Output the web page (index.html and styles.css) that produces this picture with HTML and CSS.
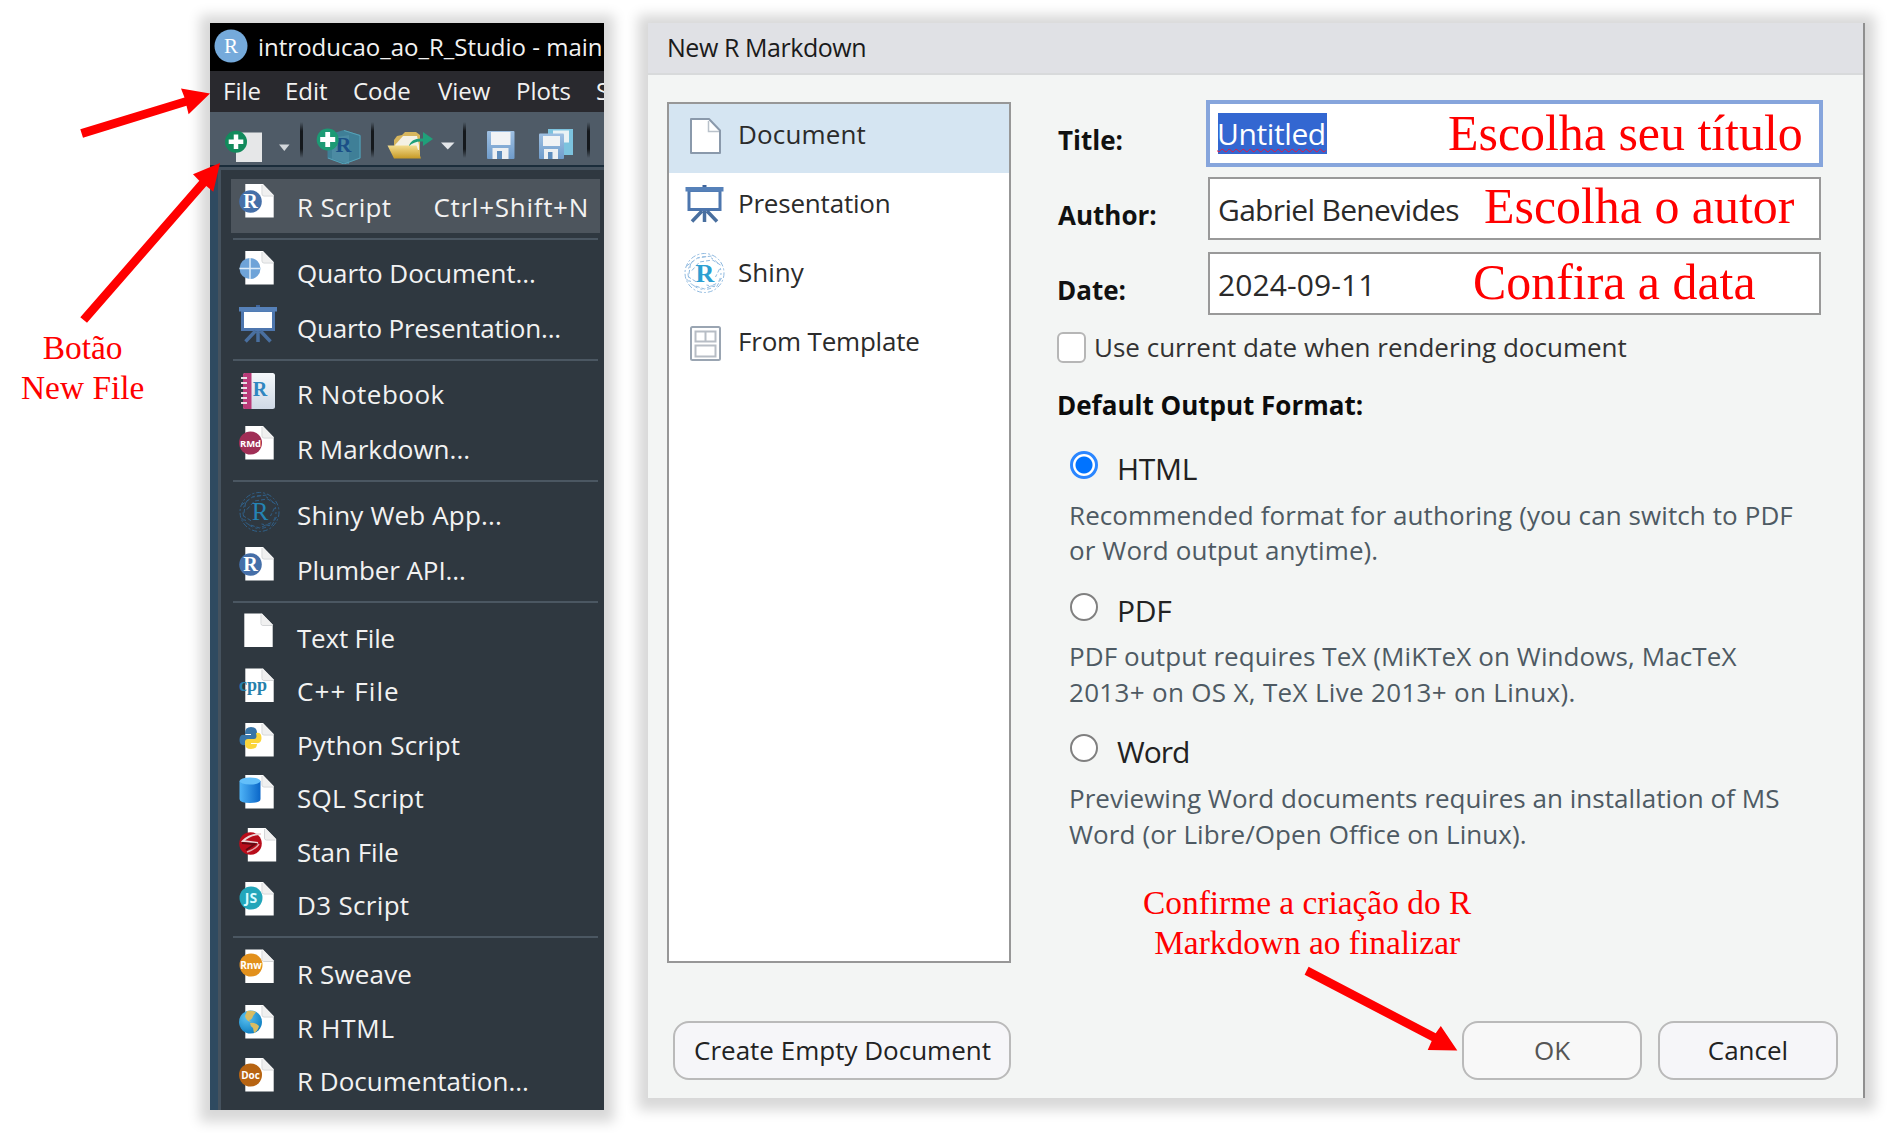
FILE: index.html
```html
<!DOCTYPE html>
<html lang="pt-BR">
<head>
<meta charset="utf-8">
<title>New R Markdown</title>
<link rel="stylesheet" href="styles.css">
</head>
<body>
<svg class="defs" width="0" height="0" aria-hidden="true">
  <defs>
    <linearGradient id="g-folder" x1="0" y1="0" x2="0" y2="1"><stop offset="0" stop-color="#f3dd8f"/><stop offset="1" stop-color="#c79a26"/></linearGradient>
    <linearGradient id="g-db" x1="0" y1="0" x2="1" y2="0"><stop offset="0" stop-color="#4fb4f7"/><stop offset="1" stop-color="#0a66c8"/></linearGradient>
    <linearGradient id="g-book" x1="0" y1="0" x2="0" y2="1"><stop offset="0" stop-color="#f5f8fb"/><stop offset="1" stop-color="#cfd9e6"/></linearGradient>
    <linearGradient id="g-disk" x1="0" y1="0" x2="0" y2="1"><stop offset="0" stop-color="#9fc0e2"/><stop offset="1" stop-color="#6f9ccb"/></linearGradient>
    <radialGradient id="g-globe" cx=".35" cy=".3" r=".8"><stop offset="0" stop-color="#5cc3f2"/><stop offset="1" stop-color="#0879bd"/></radialGradient>
    <symbol id="page" viewBox="0 0 44 54"><path d="M9.300 5H27l10.700 11v22.500H9.300z" fill="#fff"/><path d="M26.500 5v9.500q0 2 2 2h9.200z" fill="#f0f0f0"/><path d="M26 6v9q0 2 2 2h9" fill="none" stroke="#d3d5d7" stroke-width="1"/></symbol>
    <symbol id="easel" viewBox="0 0 40 40">
      <path d="M18.500 0h4v4h-4z" fill="#3f659c"/><rect x="3.500" y="4" width="34" height="22" fill="#4d76ae"/><rect x="6.500" y="7" width="28" height="16" fill="#fff"/><rect x="1.500" y="2" width="38" height="4.500" fill="#5681b9"/>
      <path d="M20.500 26v11M18 26L8 36.500M23 26l10 10.500" stroke="#496f9f" stroke-width="3.500" fill="none"/>
    </symbol>
    <symbol id="atom" viewBox="0 0 44 44">
      <g fill="none" stroke-width="1"><circle cx="22" cy="22" r="19.500" stroke-dasharray="5 2 2 2"/><circle cx="22" cy="22" r="16.500" stroke-dasharray="2 3 4 5"/>
      <path stroke-dasharray="4 2" d="M4 15L15 7 29 5M38 14L30 9 17 11 9 20M4 28L10 34 22 38 35 32M39 27L34 36 24 34M8 13L6 26 14 31M37 18L33 26"/></g>
    </symbol>
  </defs>
</svg>

<main class="stage">
  <section class="ide">
    <header class="ide-title">
      <svg width="34" height="34" viewBox="0 0 34 34"><circle cx="17" cy="17" r="16.500" fill="#75aadb"/><text x="17" y="23.500" class="serif" font-size="21" fill="#fff" text-anchor="middle">R</text></svg>
      <span>introducao_ao_R_Studio - main</span>
    </header>
    <nav class="menubar"><span>File</span><span>Edit</span><span>Code</span><span>View</span><span>Plots</span><span>Session</span></nav>
    <div class="toolbar">
      <svg width="65" height="52" viewBox="210 112 65 52"><rect x="236" y="132.500" width="26" height="29.500" fill="#e6e7e8"/><circle cx="236" cy="141.700" r="11" fill="#128a5c"/><path d="M236 134.500v14.500M228.700 141.700h14.600" stroke="#fff" stroke-width="4.500"/></svg>
      <svg width="20" height="52" viewBox="275 112 20 52"><path d="M279 144.500h10.500l-5.200 6.500z" fill="#d2d6da"/></svg>
      <i class="tsep"></i>
      <svg width="61" height="52" viewBox="305 112 61 52"><path d="M344 130l16.500 5v23.500L344 164l-16.500-5.500V135z" fill="#3f7f97"/><path d="M332 138l17-3v29l-17-5z" fill="#4c8ba3"/><text x="343.500" y="152" class="serif" font-size="22" font-weight="bold" fill="#1b5087" text-anchor="middle">R</text><path d="M344 130.500l16 5v22.500l-16 6-16-6" fill="none" stroke="#57a3b8" stroke-width="1"/><circle cx="327.700" cy="139.500" r="11" fill="#1c9a74"/><path d="M327.700 132v15M320.200 139.500h15" stroke="#fff" stroke-width="4.800"/></svg>
      <i class="tsep"></i>
      <svg width="82" height="52" viewBox="376 112 82 52"><path d="M394 158V140l3-4 5-1 3-3h11l4 3v23z" fill="#d7b65d"/><path d="M395 145l8-9h14l2 9v5h-22z" fill="#f4f1e4"/><path d="M387.500 145.500h29l4.500 13h-27z" fill="url(#g-folder)"/><path d="M409 146c1-5 6-8 14-7.500V132l10 7-10 7v-4.500c-6-.500-10 1-14 4.500z" fill="#20a07a"/><path d="M441 142.500h13.500l-6.700 7z" fill="#e3e6e9"/></svg>
      <i class="tsep"></i>
      <svg width="114" height="52" viewBox="468 112 114 52"><rect x="487" y="131" width="27.500" height="28" rx="1" fill="url(#g-disk)"/><rect x="491" y="132" width="19.500" height="13" fill="#f1f3f5"/><rect x="492.500" y="148" width="16" height="11" fill="#edf0f2"/><rect x="497" y="151" width="5" height="8" fill="#5e8dbd"/><rect x="548" y="129" width="25" height="26" fill="#7cc3de"/><rect x="553" y="130.500" width="16" height="12" fill="#e9f2f5"/><rect x="539" y="133.500" width="25" height="25.500" rx="1" fill="url(#g-disk)"/><rect x="543" y="136" width="17" height="10" fill="#f1f3f5"/><rect x="544" y="149" width="14" height="10" fill="#edf0f2"/><rect x="548" y="152" width="4.500" height="7" fill="#5e8dbd"/></svg>
      <i class="tsep"></i>
    </div>
    <div class="menu">
      <div class="row hot"><svg viewBox="0 0 44 54"><use href="#page"/><circle cx="14.500" cy="22.500" r="11.300" fill="#456fa8"/><text x="14.500" y="29" class="serif" font-size="20" font-weight="bold" fill="#fff" text-anchor="middle">R</text></svg><span class="ls3">R Script</span><kbd>Ctrl+Shift+N</kbd></div>
      <hr>
      <div class="row"><svg viewBox="0 0 44 54"><use href="#page" y="1"/><circle cx="14" cy="23.500" r="10.500" fill="#6ea3d8"/><path d="M14 13v21M3.500 23.500h21" stroke="#dcebf8" stroke-width="1.500"/></svg><span class="lsd">Quarto Document...</span></div>
      <div class="row"><svg viewBox="0 0 44 54"><use href="#easel" x="1.500" y="5" width="40" height="40"/></svg><span class="lsn">Quarto Presentation...</span></div>
      <hr>
      <div class="row"><svg viewBox="0 0 44 54"><rect x="7" y="7" width="32" height="36" rx="2.500" fill="url(#g-book)"/><path d="M9 7h6.500v36H9q-2 0-2-2V9q0-2 2-2z" fill="#b93a78"/><path d="M5 12h6M5 17h6M5 22h6M5 27h6M5 32h6M5 37h6" stroke="#e8dfe6" stroke-width="2"/><text x="24" y="30" class="serif" font-size="20" font-weight="bold" fill="#2f86c0" text-anchor="middle">R</text></svg><span class="ls5">R Notebook</span></div>
      <div class="row"><svg viewBox="0 0 44 54"><use href="#page"/><circle cx="14.500" cy="22" r="11.500" fill="#a02e56"/><text x="14.500" y="25.500" class="sans" font-size="9.500" font-weight="bold" fill="#fff" text-anchor="middle">RMd</text></svg><span>R Markdown...</span></div>
      <hr>
      <div class="row"><svg viewBox="0 0 44 54"><use href="#atom" x="1.500" y="3" width="44" height="44" stroke="#31618a"/><text x="24" y="33" class="serif" font-size="25" fill="#2584b4" text-anchor="middle">R</text></svg><span class="ls1">Shiny Web App...</span></div>
      <div class="row"><svg viewBox="0 0 44 54"><use href="#page"/><circle cx="14.500" cy="22.500" r="11.300" fill="#456fa8"/><text x="14.500" y="29" class="serif" font-size="20" font-weight="bold" fill="#fff" text-anchor="middle">R</text></svg><span class="lsd">Plumber API...</span></div>
      <hr>
      <div class="group files">
      <div class="row"><svg viewBox="0 0 44 54"><use href="#page" x="-1" y="-1.500"/></svg><span class="lsn">Text File</span></div>
      <div class="row"><svg viewBox="0 0 44 54"><use href="#page" y="0.500"/><text x="17" y="27.500" class="serif" font-size="18" font-weight="bold" fill="#2680ab" text-anchor="middle">cpp</text></svg><span class="ls10">C++ File</span></div>
      <div class="row"><svg viewBox="0 0 44 54"><use href="#page" y="1"/><path d="M9 16q0-6 6-6t6 6v4q0 3-3 3h-6q-3 0-3 3v2q-5.500 1-5.500-5t5.500-5h6v-1H9z" fill="#3875a8"/><path d="M20 16q5.500-1 5.500 5t-5.500 5h-5v1h6q0 5-6 5t-6-5v-2q0-3 3-3h6q2.500 0 2.500-3z" fill="#fbd63c"/></svg><span class="ls1">Python Script</span></div>
      <div class="row"><svg viewBox="0 0 44 54"><use href="#page"/><path d="M3.500 11v18q0 4 10.500 4t10.500-4V11z" fill="url(#g-db)"/><ellipse cx="14" cy="11" rx="10.500" ry="3.500" fill="#63bffa"/></svg><span class="ls3">SQL Script</span></div>
      <div class="row"><svg viewBox="0 0 44 54"><use href="#page" x="2.500" y="-1"/><circle cx="14.500" cy="19.500" r="11.300" fill="#b80d1b"/><path d="M25 10c-8 0-14 3-18 7l15 2" fill="none" stroke="#ecd5d7" stroke-width="2"/><path d="M6 19l13 1-9 6" fill="none" stroke="#650711" stroke-width="2"/><path d="M23 20q-3 5-12 8" fill="none" stroke="#e3a7ab" stroke-width="1.500"/></svg><span>Stan File</span></div>
      <div class="row"><svg viewBox="0 0 44 54"><use href="#page"/><circle cx="15" cy="21" r="11.500" fill="#22a6ba"/><text x="15" y="26" class="sans" font-size="14" font-weight="bold" fill="#d8fbff" text-anchor="middle">JS</text></svg><span class="ls3">D3 Script</span></div>
      </div>
      <hr>
      <div class="group">
      <div class="row"><svg viewBox="0 0 44 54"><use href="#page" y="-1.500"/><circle cx="15" cy="19" r="11.500" fill="#e2901c"/><text x="15" y="23" class="sans" font-size="10" font-weight="bold" fill="#fff" text-anchor="middle">Rnw</text></svg><span class="ls1">R Sweave</span></div>
      <div class="row"><svg viewBox="0 0 44 54"><use href="#page"/><circle cx="14.500" cy="22" r="11.500" fill="url(#g-globe)"/><path d="M11 11q5-1 9 1l-3 4q-1 4-4 4l2 2q-5-1-6-6zM14 23q5-1 9 3-1 5-5 7l-1-5q-3-2-3-5z" fill="#d9bc62"/></svg><span class="ls7">R HTML</span></div>
      <div class="row"><svg viewBox="0 0 44 54"><use href="#page"/><circle cx="14.500" cy="22" r="11.500" fill="#b76412"/><text x="14.500" y="26" class="sans" font-size="10" font-weight="bold" fill="#fff" text-anchor="middle">Doc</text></svg><span>R Documentation...</span></div>
      </div>
    </div>
  </section>

  <section class="dialog">
    <header class="dialog-title">New R Markdown</header>
    <div class="dialog-body">
      <ul class="types">
        <li class="on"><svg viewBox="0 0 44 54"><path d="M9 13h18l11 11.500V47H9z" fill="#fff" stroke="#8a99ab" stroke-width="2" stroke-linejoin="round"/><path d="M26.500 15v10.500H37" fill="none" stroke="#b9c1ca" stroke-width="1.500"/></svg><span class="ls1">Document</span></li>
        <li><svg viewBox="0 0 44 54"><use href="#easel" x="2" y="10" width="40" height="40"/></svg><span class="lsn">Presentation</span></li>
        <li><svg viewBox="0 0 44 54"><use href="#atom" x="0.500" y="7" width="44" height="44" stroke="#8fb9df"/><text x="23" y="37.500" class="serif" font-size="26" font-weight="bold" fill="#2d9fd2" text-anchor="middle">R</text></svg><span>Shiny</span></li>
        <li><svg viewBox="0 0 44 54"><rect x="9" y="14" width="29" height="33" rx="1.500" fill="#fff" stroke="#9aa5b2" stroke-width="2"/><path d="M13.500 18.500h20v10h-20zM23.500 18.500v10M13.500 32.500h20v11h-20z" fill="none" stroke="#b7bdc5" stroke-width="2"/></svg><span class="lsn">From Template</span></li>
      </ul>
      <div class="form">
        <div class="field"><label>Title:</label><div class="input focus"><mark>Untitled</mark></div></div>
        <div class="field"><label>Author:</label><div class="input author">Gabriel Benevides</div></div>
        <div class="field"><label class="out">Date:</label><div class="input date">2024-09-11</div></div>
        <div class="check"><i></i><span>Use current date when rendering document</span></div>
        <h2>Default Output Format:</h2>
        <div class="option"><div class="choice"><i class="radio on"></i><span>HTML</span></div><p>Recommended format for authoring (you can switch to PDF<br>or Word output anytime).</p></div>
        <div class="option"><div class="choice"><i class="radio"></i><span>PDF</span></div><p>PDF output requires TeX (MiKTeX on Windows, MacTeX<br><span class="ls3">2013+ on OS X, TeX Live 2013+ on Linux).</span></p></div>
        <div class="option"><div class="choice"><i class="radio"></i><span class="word">Word</span></div><p><span class="ls0">Previewing Word documents requires an installation of MS</span><br>Word (or Libre/Open Office on Linux).</p></div>
      </div>
    </div>
    <footer><button class="empty">Create Empty Document</button><button class="ok">OK</button><button>Cancel</button></footer>
  </section>

  <p class="note big n-title">Escolha seu título</p>
  <p class="note big n-author">Escolha o autor</p>
  <p class="note big n-date">Confira a data</p>
  <p class="note n-new">Botão<br>New File</p>
  <p class="note n-ok">Confirme a criação do R<br>Markdown ao finalizar</p>
  <svg class="arrows" width="1888" height="1133" viewBox="0 0 1888 1133" fill="#f00">
    <path d="M80.300 129.300L184.500 97.500 181 88.500 210 93.500 188.600 114.300 186.500 105.800 83 137.700z"/>
    <path d="M80.300 317.300L199.300 180.700 193 174.300 220 163 213.300 191.700 206.300 186 87 322.700z"/>
    <path d="M1308.600 966.700L1435.700 1033.300 1440.800 1026 1457.300 1050.500 1427.700 1050 1431.700 1041 1304.600 974.700z"/>
  </svg>
</main>
</body>
</html>
```
FILE: styles.css
```css
* { box-sizing: border-box; }
body { margin: 0; background: #fff; font-family: "Open Sans", "Noto Sans", sans-serif; }
.defs { position: absolute; }
.serif { font-family: "Liberation Serif", serif; }
.sans { font-family: "Open Sans", sans-serif; }

.stage {
  position: relative;
  display: flex;
  align-items: flex-start;
  width: 1888px;
  height: 1133px;
  padding: 23px 0 0 210px;
  overflow: hidden;
}
.ide, .dialog { flex: none; box-shadow: 0 2px 12px 10px #d8d8d8; }

/* IDE window */
.ide { width: 394px; height: 1087px; overflow: hidden; background: #2f4a60; color: #f2f2f2; white-space: nowrap; }
.ide-title { display: flex; align-items: flex-start; height: 48px; padding: 6px 0 0 4px; background: #000; font-size: 24px; line-height: 36px; }
.ide-title span { margin-left: 10px; }
.menubar { display: grid; grid-template-columns: 62px 68px 85px 78px 80px 90px; height: 41px; padding-left: 13px; background: #29292e; font-size: 24px; line-height: 40px; }
.toolbar { display: flex; height: 55px; background: #4f5b67; border-bottom: 2px solid #1b2d3b; }
.toolbar svg { flex: none; }
.tsep { flex: none; width: 3px; height: 36px; margin: 10px 2px 0 5px; background: linear-gradient(#4f5b67, #14181c 25%, #14181c 75%, #4f5b67); }
.menu { height: 943px; margin-left: 8px; padding: 9px 4px 0 10px; background: #2f3840; border-left: 3px solid #45525e; border-top: 3px solid #45525e; }
.row { display: flex; height: 54.5px; padding-left: 5px; font-size: 26px; line-height: 56px; }
.row svg { flex: none; width: 44px; height: 54px; margin-right: 17px; overflow: visible; }
.row.hot { height: 54px; background: #4d555d; }
.row kbd { margin-left: 42px; font: inherit; letter-spacing: .72px; }
.menu hr { height: 2px; margin: 5px 2px; border: 0; background: #4b5762; }
.menu .group { padding-top: 3px; }
.menu .files { padding: 2px 0 1px; }
.group .row { height: 53.4px; }

.ls0 { letter-spacing: .03px; }
.ls1 { letter-spacing: .15px; }
.ls3 { letter-spacing: .32px; }
.ls5 { letter-spacing: .5px; }
.ls7 { letter-spacing: .75px; }
.ls10 { letter-spacing: 1.1px; }
.lsn { letter-spacing: -.2px; }
.lsd { letter-spacing: -.08px; }

/* Dialog */
.dialog { width: 1217px; height: 1075px; margin-left: 44px; background: #f3f5f4; border-right: 2px solid #8f8f8f; color: #222; }
.dialog-title { height: 52px; padding-left: 19px; background: #e0e1e5; border-bottom: 2px solid #d8dadb; font-size: 25px; line-height: 49px; letter-spacing: -.45px; color: #1b1b1b; }
.dialog-body { display: flex; height: 925px; padding: 25px 0 0 19px; }
.types { width: 344px; height: 861px; margin: 2px 47px 0 0; padding: 0; border: 2px solid #979797; background: #fff; list-style: none; font-size: 26px; color: #2b2b2b; }
.types li { display: flex; height: 69px; padding-left: 12.500px; line-height: 60px; }
.types li.on { background: #d5e5f2; }
.types svg { flex: none; width: 44px; height: 54px; margin-right: 12.500px; overflow: visible; margin-top: 2px; }
.form { width: 766px; }
.field { display: grid; grid-template-columns: 150px 613px; align-items: center; height: 63px; margin-bottom: 12px; font-size: 26px; }
.field label { padding-top: 12px; font-weight: 700; line-height: 36px; color: #111; }
.out { margin-left: -1px; }
.input { height: 63px; padding-left: 8px; border: 2px solid #999; background: #fff; font-size: 30px; line-height: 61px; color: #2a2a2a; }
.author { letter-spacing: -.68px; }
.date { letter-spacing: .1px; }
.field:first-child { height: 67px; margin-bottom: 10px; }
.input.focus { width: 617px; height: 67px; margin-left: -2px; padding-left: 8px; border: 4px solid #86a5dc; }
mark { display: inline-block; height: 41px; margin-top: 9px; padding: 0 1px 0 0; vertical-align: top; background: #3367d1; color: #fff; line-height: 41px; letter-spacing: -.4px; text-indent: -1px; text-decoration: underline wavy #e5173f 1px; text-decoration-skip-ink: none; text-underline-offset: 3px; }
.check { display: flex; height: 32px; margin: 17px 0 0 -1px; font-size: 26px; line-height: 30px; color: #333; }
.check i { width: 29px; height: 31px; margin-right: 8px; border: 2px solid #b6b6b6; border-radius: 6px; background: #fff; }
.field:nth-child(3) { margin-bottom: 0; }
h2 { margin: 26px 0 28px -1px; font-size: 26px; line-height: 30px; color: #0c0c0c; }
.option { height: 141.700px; padding-left: 12px; }
.choice { display: flex; height: 40px; font-size: 30px; line-height: 41px; color: #222; letter-spacing: -.3px; }
.word { letter-spacing: -1px; }
.radio { width: 28px; height: 28px; margin: 3px 19px 0 0; border: 2px solid #808080; border-radius: 50%; background: #fff; }
.radio.on { border: 3px solid #2a86ff; background: radial-gradient(circle, #0073ff 8px, #fff 9px); }
.option p { margin: 9.600px 0 0 -1px; font-size: 26px; line-height: 35.600px; letter-spacing: .09px; color: #4e5a63; white-space: nowrap; }
footer { display: flex; padding: 21px 25px 0; }
button { width: 180px; height: 59px; padding: 0 0 1px; border: 2px solid #bababa; border-radius: 16px; background: #f6f6f9; font: 26px "Open Sans", sans-serif; color: #222; }
.empty { width: 338px; margin-right: auto; padding-left: 1px; }
.ok { margin-right: 16px; background: #f8f8f8; color: #555; }

/* Tutorial annotations drawn over both windows */
.note { position: absolute; margin: 0; color: #f00; font: 33.400px/40.300px "Liberation Serif", serif; text-align: center; white-space: nowrap; }
.big { font-size: 49.900px; line-height: 60px; }
.n-title { left: 1448px; top: 104px; }
.n-author { left: 1484px; top: 177px; }
.n-date { left: 1473px; top: 253px; }
.n-new { left: 21px; top: 328px; }
.n-ok { left: 1143px; top: 883px; }
.arrows { position: absolute; left: 0; top: 0; }
```
